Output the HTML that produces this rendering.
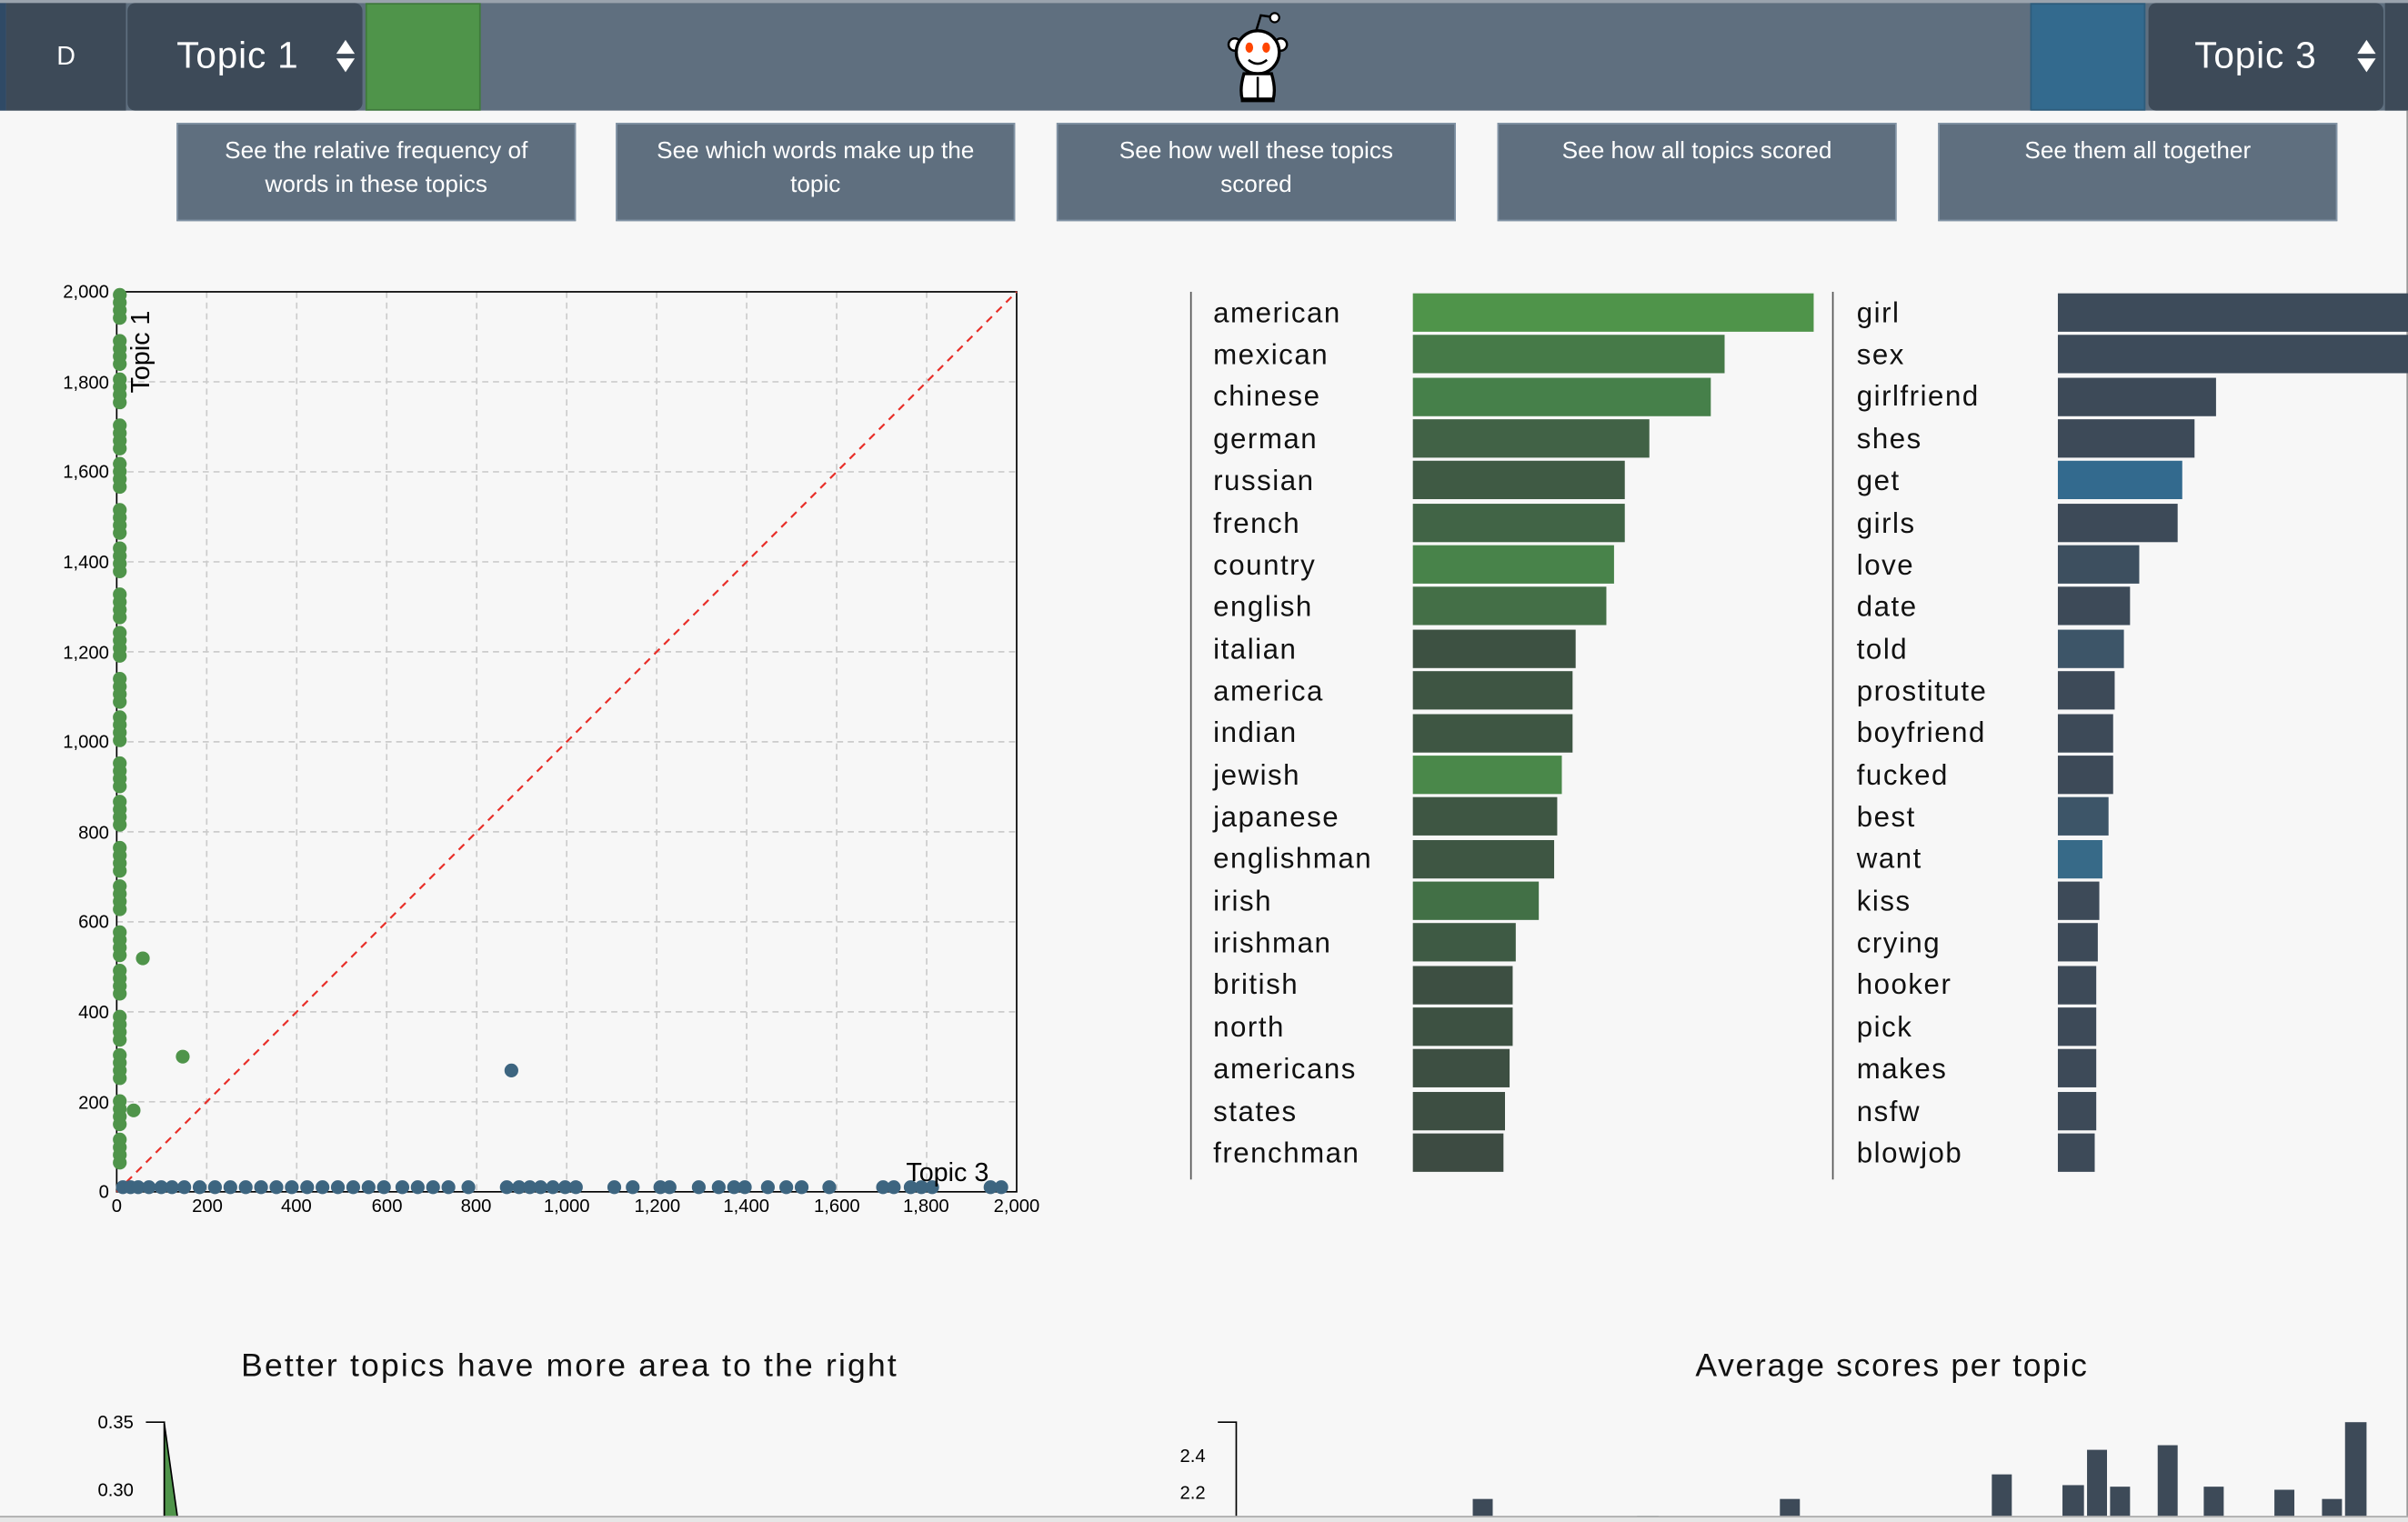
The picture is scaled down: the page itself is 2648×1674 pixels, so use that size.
<!DOCTYPE html>
<html><head><meta charset="utf-8"><style>
*{margin:0;padding:0;box-sizing:border-box}
html,body{width:2648px;height:1674px;overflow:hidden;background:#f7f7f7;font-family:"Liberation Sans",sans-serif}
#w{position:absolute;left:0;top:0;width:1568px;height:991px;transform:scale(1.68878,1.6892);transform-origin:0 0;background:#f7f7f7}
.a{position:absolute}
.hdr{left:0;top:0;width:1568px;height:72px;background:#5f6f7f;border-top:2px solid #9aa3ad}
.dk{background:#3d4a58}
.tp{color:#fff;font-size:24px;line-height:70px;letter-spacing:.5px}
.btn{top:80px;width:260px;height:64px;background:#5f6f7f;border:1px solid #8294a6;color:#fff;font-size:15.5px;text-align:center;line-height:22px;padding-top:7px;white-space:nowrap}
.arr{position:absolute;width:0;height:0;border-left:6px solid transparent;border-right:6px solid transparent}
.wl{position:absolute;font-size:18.5px;color:#111;letter-spacing:.9px;line-height:25px}
</style></head><body><div id="w">
<div class="a hdr"></div>
<div class="a dk" style="left:0;top:2px;width:4px;height:70px;background:#2f4a66"></div>
<div class="a dk" style="left:4px;top:2px;width:78px;height:70px;color:#fff;font-size:17px;text-align:center;line-height:70px">D</div>
<div class="a dk" style="left:83px;top:2px;width:153px;height:70px;border-radius:5px"></div>
<div class="a tp" style="left:115px;top:2px">Topic 1</div>
<div class="arr" style="left:219px;top:26px;border-bottom:9px solid #fff"></div>
<div class="arr" style="left:219px;top:38px;border-top:9px solid #fff"></div>
<div class="a" style="left:238px;top:2px;width:75px;height:70px;background:#4f944a;border:1px solid #3f7a3c"></div>
<div class="a" style="left:1322px;top:2px;width:75px;height:70px;background:#336a8e;border:1px solid #2d5c7c"></div>
<div class="a dk" style="left:1399px;top:2px;width:153px;height:70px;border-radius:5px"></div>
<div class="a dk" style="left:1553px;top:2px;width:15px;height:70px"></div>
<div class="a tp" style="left:1429px;top:2px">Topic 3</div>
<div class="arr" style="left:1535px;top:26px;border-bottom:9px solid #fff"></div>
<div class="arr" style="left:1535px;top:38px;border-top:9px solid #fff"></div>
<svg class="a" style="left:795px;top:6px" width="48" height="62" viewBox="0 0 48 62">
<path d="M23 14 L26 4 L33 5" stroke="#000" stroke-width="1.5" fill="none"/><circle cx="35" cy="5.5" r="3" fill="#fff" stroke="#000" stroke-width="1.3"/>
<circle cx="9" cy="23" r="4" fill="#fff" stroke="#000" stroke-width="1.5"/><circle cx="39" cy="23" r="4" fill="#fff" stroke="#000" stroke-width="1.5"/>
<ellipse cx="24" cy="28" rx="14" ry="14" fill="#fff" stroke="#000" stroke-width="2"/>
<ellipse cx="18.5" cy="25" rx="2.5" ry="3.3" fill="#ff4500"/><ellipse cx="29.5" cy="25" rx="2.5" ry="3.3" fill="#ff4500"/>
<path d="M18 33 Q24 38 30 33" stroke="#000" stroke-width="1.5" fill="none"/>
<path d="M15 42 Q12 52 14 59 L34 59 Q36 52 33 42 Z" fill="#fff" stroke="#000" stroke-width="2"/>
<path d="M24 44 L24 59" stroke="#000" stroke-width="1.5"/><path d="M13 59 h22" stroke="#000" stroke-width="3"/>
</svg>
<div class="a btn" style="left:115px">See the relative frequency of<br>words in these topics</div>
<div class="a btn" style="left:401px">See which words make up the<br>topic</div>
<div class="a btn" style="left:688px">See how well these topics<br>scored</div>
<div class="a btn" style="left:975px">See how all topics scored</div>
<div class="a btn" style="left:1262px">See them all together</div>

<svg class="a" style="left:0;top:170px" width="700" height="640">
<g id="grid"></g>
<rect x="76" y="20" width="586" height="586" fill="none" stroke="#000" stroke-width="1"/>
<line x1="76" y1="606" x2="662" y2="20" stroke="#e8302a" stroke-width="1.3" stroke-dasharray="5,4"/>
<g id="dots"></g>
<text x="590" y="599" font-size="17" font-family="Liberation Sans">Topic 3</text>
<text transform="translate(97,86) rotate(-90)" font-size="17" font-family="Liberation Sans">Topic 1</text>
<g font-size="12" font-family="Liberation Sans" text-anchor="end">
<text x="71" y="24">2,000</text><text x="71" y="83">1,800</text><text x="71" y="141">1,600</text><text x="71" y="200">1,400</text><text x="71" y="259">1,200</text><text x="71" y="317">1,000</text><text x="71" y="376">800</text><text x="71" y="434">600</text><text x="71" y="493">400</text><text x="71" y="552">200</text><text x="71" y="610">0</text></g>
<g font-size="12" font-family="Liberation Sans" text-anchor="middle">
<text x="76" y="619">0</text><text x="135" y="619">200</text><text x="193" y="619">400</text><text x="252" y="619">600</text><text x="310" y="619">800</text><text x="369" y="619">1,000</text><text x="428" y="619">1,200</text><text x="486" y="619">1,400</text><text x="545" y="619">1,600</text><text x="603" y="619">1,800</text><text x="662" y="619">2,000</text></g>
</svg>

<div class="a" style="left:775px;top:190px;width:1px;height:578px;background:#555"></div>
<div class="a" style="left:1193px;top:190px;width:1px;height:578px;background:#555"></div>
<div class="a" style="left:157px;top:878px;font-size:21px;color:#111;letter-spacing:1.3px">Better topics have more area to the right</div>
<div class="a" style="left:1104px;top:878px;font-size:21px;color:#111;letter-spacing:1px">Average scores per topic</div>
<svg class="a" style="left:0;top:915px" width="1568" height="76">
<g font-size="12" font-family="Liberation Sans" text-anchor="end"><text x="87" y="15">0.35</text><text x="87" y="59">0.30</text><text x="785" y="37">2.4</text><text x="785" y="61">2.2</text></g>
<path d="M95 11 H107 V76" stroke="#000" fill="none"/>
<path d="M107 12 L116 76 L107 76Z" fill="#4f944a" stroke="#000" stroke-width="1"/>
<path d="M793 11 H805 V76" stroke="#000" fill="none"/>
<g fill="#3d4a58" id="bb"></g>
</svg>
<div class="a" style="left:0;top:987px;width:1568px;height:4px;background:#e6e6e6;border-top:1px solid #aaa"></div>
<div class="a" style="left:1567px;top:72px;width:1px;height:915px;background:#999"></div>

<div class="wl" style="left:790px;top:191px">american</div><div class="wl" style="left:790px;top:218px">mexican</div><div class="wl" style="left:790px;top:245px">chinese</div><div class="wl" style="left:790px;top:273px">german</div><div class="wl" style="left:790px;top:300px">russian</div><div class="wl" style="left:790px;top:328px">french</div><div class="wl" style="left:790px;top:355px">country</div><div class="wl" style="left:790px;top:382px">english</div><div class="wl" style="left:790px;top:410px">italian</div><div class="wl" style="left:790px;top:437px">america</div><div class="wl" style="left:790px;top:464px">indian</div><div class="wl" style="left:790px;top:492px">jewish</div><div class="wl" style="left:790px;top:519px">japanese</div><div class="wl" style="left:790px;top:546px">englishman</div><div class="wl" style="left:790px;top:574px">irish</div><div class="wl" style="left:790px;top:601px">irishman</div><div class="wl" style="left:790px;top:628px">british</div><div class="wl" style="left:790px;top:656px">north</div><div class="wl" style="left:790px;top:683px">americans</div><div class="wl" style="left:790px;top:711px">states</div><div class="wl" style="left:790px;top:738px">frenchman</div>
<div class="wl" style="left:1209px;top:191px">girl</div><div class="wl" style="left:1209px;top:218px">sex</div><div class="wl" style="left:1209px;top:245px">girlfriend</div><div class="wl" style="left:1209px;top:273px">shes</div><div class="wl" style="left:1209px;top:300px">get</div><div class="wl" style="left:1209px;top:328px">girls</div><div class="wl" style="left:1209px;top:355px">love</div><div class="wl" style="left:1209px;top:382px">date</div><div class="wl" style="left:1209px;top:410px">told</div><div class="wl" style="left:1209px;top:437px">prostitute</div><div class="wl" style="left:1209px;top:464px">boyfriend</div><div class="wl" style="left:1209px;top:492px">fucked</div><div class="wl" style="left:1209px;top:519px">best</div><div class="wl" style="left:1209px;top:546px">want</div><div class="wl" style="left:1209px;top:574px">kiss</div><div class="wl" style="left:1209px;top:601px">crying</div><div class="wl" style="left:1209px;top:628px">hooker</div><div class="wl" style="left:1209px;top:656px">pick</div><div class="wl" style="left:1209px;top:683px">makes</div><div class="wl" style="left:1209px;top:711px">nsfw</div><div class="wl" style="left:1209px;top:738px">blowjob</div>
</div>
<script>
var W=document.getElementById('w');
var le=[1181,1123,1114,1074,1058,1058,1051,1046,1026,1024,1024,1017,1014,1012,1002,987,985,985,983,980,979];
var lc=["#4f944a","#467a48","#46804a","#416246","#3f5a44","#416446","#48834a","#446f47","#3d5142","#3e5543","#3e5643","#4a884a","#3e5643","#3e5643","#427046","#3e5a44","#3d4f42","#3d5142","#3d4f42","#3d4e42","#3d4b42"];
var re=[1568,1568,1443,1429,1421,1418,1393,1387,1383,1377,1376,1376,1373,1369,1367,1366,1365,1365,1365,1365,1364];
var rc=["#3d4b5a","#3d4b5a","#3d4a58","#3d4a58","#336a8e","#3d4a58","#3d4f5f","#3d4a58","#3d5568","#3d4a58","#3d4a58","#3d4a58","#3d5568","#376a88","#3d4a58","#3d4a58","#3d4a58","#3d4a58","#3d4a58","#3d4a58","#3d4a58"];
function add(s){var d=document.createElement('div');d.className='a';d.setAttribute('style',s);W.appendChild(d);}
for(var i=0;i<21;i++){var y=191+i*27.35;
add('left:920px;top:'+y+'px;width:'+(le[i]-920)+'px;height:25px;background:'+lc[i]);
add('left:1340px;top:'+y+'px;width:'+(re[i]-1340)+'px;height:25px;background:'+rc[i]);}
var ns="http://www.w3.org/2000/svg",g=document.getElementById('grid');
for(var k=1;k<10;k++){var v=76+k*58.6;var l=document.createElementNS(ns,'line');l.setAttribute('x1',v);l.setAttribute('x2',v);l.setAttribute('y1',20);l.setAttribute('y2',606);l.setAttribute('stroke','#ccc');l.setAttribute('stroke-dasharray','4,3');g.appendChild(l);
var h=document.createElementNS(ns,'line');h.setAttribute('y1',20+k*58.6);h.setAttribute('y2',20+k*58.6);h.setAttribute('x1',76);h.setAttribute('x2',662);h.setAttribute('stroke','#ccc');h.setAttribute('stroke-dasharray','4,3');g.appendChild(h);}
var D=document.getElementById('dots');
function c(x,y,f){var e=document.createElementNS(ns,'circle');e.setAttribute('cx',x);e.setAttribute('cy',y);e.setAttribute('r',4.5);e.setAttribute('fill',f);D.appendChild(e);}
var xs=[80,85,90,97,105,112,120,130,140,150,160,170,180,190,200,210,220,230,240,250,262,272,282,292,305,330,338,345,352,360,368,375,400,412,430,436,455,468,478,485,500,512,522,540,575,582,593,600,607,645,652];
xs.forEach(function(x){c(x,603,'#3d6580')});
for(var y=22;y<600;y+=5){if(((y*7)%11)<8)c(78,y,'#4f944a')}
c(93,454,'#4f944a');c(119,518,'#4f944a');c(87,553,'#4f944a');c(333,527,'#3d6580');
var bb=document.getElementById('bb');
[[959,61,13],[1066,72,14],[1159,61,13],[1297,45,13],[1343,52,14],[1359,29,13],[1374,53,13],[1405,26,13],[1435,53,13],[1481,55,13],[1512,61,13],[1527,11,14]].forEach(function(b){var r=document.createElementNS(ns,'rect');r.setAttribute('x',b[0]);r.setAttribute('y',b[1]);r.setAttribute('width',b[2]);r.setAttribute('height',76-b[1]);bb.appendChild(r);});
</script>
</body></html>
